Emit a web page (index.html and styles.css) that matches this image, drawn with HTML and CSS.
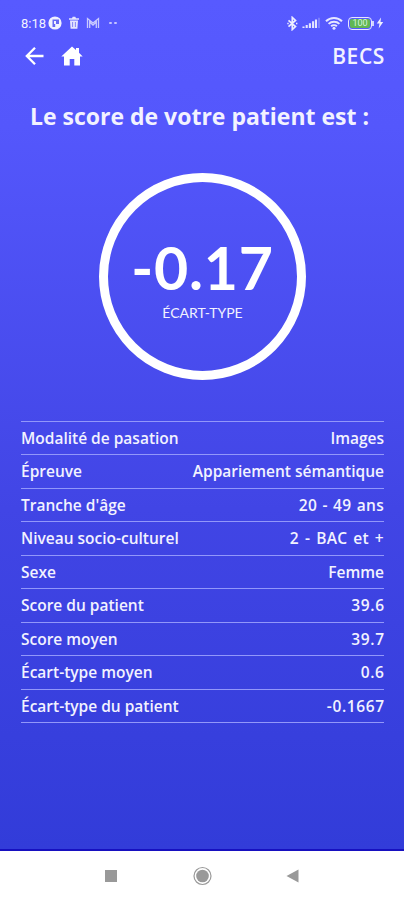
FILE: index.html
```html
<!DOCTYPE html>
<html lang="fr">
<head>
    <meta charset="UTF-8">
    <meta name="viewport" content="width=device-width, initial-scale=1.0">
    <title>BECS</title>
    <link rel="stylesheet" href="styles.css">
</head>
<body>

<div class="screen">
    <div class="status-bar">
        <span class="clock">8:18</span>
        <svg width="14" height="14" viewBox="0 0 14 14">
            <circle cx="7" cy="7" r="6.600" fill="#f0f0ff"/>
            <path d="M4.500 3.500v7.500h2.700V8H11V3.500z" fill="#6668f4"/>
            <path d="M6 5h2v3H6z" fill="#f0f0ff"/>
        </svg>
        <svg class="icon-trash" width="12" height="14" viewBox="0 0 12 14">
            <path d="M1 2.200h3l.7-1.400h2.600L8 2.200h3v1.600H1zM2 4.600h8l-.6 8.200H2.600z" fill="#e4e5ff"/>
            <path d="M4.600 6v5M7.400 6v5" stroke="#7779f4" stroke-width=".9"/>
        </svg>
        <svg class="icon-mail" width="14" height="12" viewBox="0 0 14 12">
            <path d="M1.500 11V1.500L7 6l5.500-4.500V11M3.700 11V5L7 8l3.300-3v6" fill="none" stroke="#c9caff" stroke-width="1.300"/>
        </svg>
        <span class="dots"><i></i><i></i></span>

        <span class="spacer"></span>

        <svg width="11" height="15" viewBox="0 0 11 15">
            <path d="M1.500 4.300 8.500 10.500 5.300 13.500V1.500L8.500 4.500 1.500 10.700" fill="none" stroke="#eeeeff" stroke-width="1.700"/>
            <path d="M.3 7.500h1.400M9 7.500h1.400" stroke="#eeeeff" stroke-width="1.500"/>
        </svg>
        <svg class="icon-signal" width="18" height="12" viewBox="0 0 18 12">
            <path d="M1.500 11V9.500M4.700 11V8M7.900 11V6.300M11.100 11V4.300M14 11V2.500" stroke="#e4e5ff" stroke-width="2.100"/>
            <path d="M17 11V.8" stroke="#9092ff" stroke-width="1.300"/>
        </svg>
        <svg class="icon-wifi" width="18" height="14" viewBox="0 0 18 14">
            <path d="M1 5.200a11.500 11.500 0 0 1 16 0M3.600 7.900a7.700 7.700 0 0 1 10.800 0M6.100 10.300a4.200 4.200 0 0 1 5.800 0" fill="none" stroke="#e6e7ff" stroke-width="2"/>
            <circle cx="9" cy="12.200" r="1.500" fill="#e6e7ff"/>
        </svg>
        <span class="battery"><span class="battery-level">100</span></span>
        <svg class="icon-bolt" width="8" height="12" viewBox="0 0 8 12">
            <path d="M5 .5.8 6.600h2.700L2.700 11.500 7.200 5H4.500z" fill="#eeeeff"/>
        </svg>
    </div>

    <header class="top-bar">
        <svg width="20" height="20" viewBox="0 0 20 20">
            <path d="M18.500 10H2M10 1.700 1.800 10l8.200 8.300" fill="none" stroke="#fff" stroke-width="2.300"/>
        </svg>
        <svg class="icon-home" width="22" height="20" viewBox="0 0 22 20">
            <path d="M11 .4 15 4V2h3v4.700L21.700 10.600H19V19.500H13.300V13H8.700v6.500H3V10.600H.3z" fill="#fff"/>
        </svg>
        <h1 class="app-name">BECS</h1>
    </header>

    <h2 class="title">Le score de votre patient est :</h2>

    <div class="score-circle">
        <div class="score">-0.17</div>
        <div class="score-unit">ÉCART-TYPE</div>
    </div>

    <ul class="details">
        <li><span>Modalité de pasation</span><span>Images</span></li>
        <li><span>Épreuve</span><span>Appariement sémantique</span></li>
        <li><span>Tranche d'âge</span><span class="range">20 - 49 ans</span></li>
        <li><span>Niveau socio-culturel</span><span class="level">2 - BAC et +</span></li>
        <li><span>Sexe</span><span>Femme</span></li>
        <li><span>Score du patient</span><span class="number">39.6</span></li>
        <li><span>Score moyen</span><span class="number">39.7</span></li>
        <li><span>Écart-type moyen</span><span class="number">0.6</span></li>
        <li><span>Écart-type du patient</span><span class="number">-0.1667</span></li>
    </ul>
</div>

<div class="nav-bar">
    <svg width="14" height="14" viewBox="0 0 14 14"><rect x="1" y="1" width="12" height="12" fill="#999"/></svg>
    <svg width="20" height="20" viewBox="0 0 20 20">
        <circle cx="10.500" cy="10" r="8.500" fill="none" stroke="#999" stroke-width="1.200"/>
        <circle cx="10.500" cy="10" r="6.300" fill="#999"/>
    </svg>
    <svg width="14" height="14" viewBox="0 0 14 14"><path d="M12.500 .5v13L.5 7z" fill="#999"/></svg>
</div>

</body>
</html>
```

FILE: styles.css
```css
* {
    box-sizing: border-box;
}

body {
    margin: 0;
    height: 900px;
    display: flex;
    flex-direction: column;
    background-color: #fff;
    color: #f2f2ff;
    font-family: "Open Sans", "Noto Sans", sans-serif;
}

svg {
    display: block;
    flex: none;
}

.screen {
    height: 851px;
    padding-top: 12px;
    background: linear-gradient(#575aff 0%, #5457fc 15%, #4145e5 60%, #323cd9 100%);
    border-bottom: 2px solid #1710c0;
}

.status-bar {
    display: flex;
    align-items: center;
    height: 22px;
    margin-bottom: 11px;
    padding: 0 20px 0 21px;
}

.clock {
    width: 27px;
    font-family: Roboto, sans-serif;
    font-size: 13px;
    white-space: nowrap;
}

.icon-trash {
    margin-left: 6px;
}

.icon-mail {
    margin-left: 6px;
}

.dots {
    display: flex;
    gap: 2px;
    margin-left: 9px;
}

.dots i {
    width: 3px;
    height: 2px;
    border-radius: 1px;
    background-color: #c4c5ff;
}

.spacer {
    flex: 1;
}

.icon-signal {
    margin-left: 4px;
}

.icon-wifi {
    margin-left: 5px;
}

.battery {
    position: relative;
    width: 24px;
    height: 13px;
    margin-left: 5px;
    padding: 1px;
    border: 1px solid #e6e7ff;
    border-radius: 4px;
}

.battery::after {
    content: "";
    position: absolute;
    top: 3px;
    right: -3px;
    width: 2px;
    height: 5px;
    background-color: #cfd3ff;
}

.battery-level {
    display: block;
    height: 9px;
    border-radius: 2px;
    background-color: #61b653;
    color: #d8f5dc;
    font-family: Roboto, sans-serif;
    font-size: 9px;
    line-height: 9px;
    text-align: center;
}

.icon-bolt {
    margin-left: 4px;
}

.top-bar {
    display: flex;
    align-items: center;
    height: 22px;
    padding: 0 20px 0 25px;
}

.icon-home {
    margin-left: 16px;
}

.app-name {
    margin: 0 -1px 0 auto;
    font-size: 21px;
    font-weight: 600;
    letter-spacing: 0.6px;
    line-height: 24px;
}

.title {
    margin: 32px 0 0;
    padding-right: 5px;
    font-size: 23px;
    font-weight: 700;
    line-height: 34px;
    text-align: center;
    white-space: nowrap;
}

.score-circle {
    width: 207px;
    height: 207px;
    margin: 40px 98px 0 99px;
    padding-top: 55px;
    border: 9px solid #fff;
    border-radius: 50%;
    font-family: Lato, sans-serif;
    text-align: center;
}

.score {
    color: #fff;
    font-size: 59px;
    font-weight: 700;
    letter-spacing: 0.8px;
    line-height: 62px;
}

.score-unit {
    margin-top: 5px;
    font-size: 14px;
    line-height: 18px;
}

.details {
    margin: 41px 20px 0 21px;
    padding: 0;
    list-style: none;
    border-top: 1px solid #9297fa;
}

.details li {
    display: flex;
    justify-content: space-between;
    height: 33.45px;
    border-bottom: 1px solid #9297fa;
    font-size: 15.5px;
    font-weight: 600;
    line-height: 32.4px;
    white-space: nowrap;
}

.details .range {
    letter-spacing: 0.3px;
    word-spacing: 1px;
}

.details .level {
    letter-spacing: 0.3px;
    word-spacing: 1.6px;
}

.details .number {
    margin-right: -0.6px;
    letter-spacing: 0.6px;
}

.nav-bar {
    display: flex;
    justify-content: space-between;
    align-items: center;
    height: 49px;
    padding: 1px 104px 0;
}
```
